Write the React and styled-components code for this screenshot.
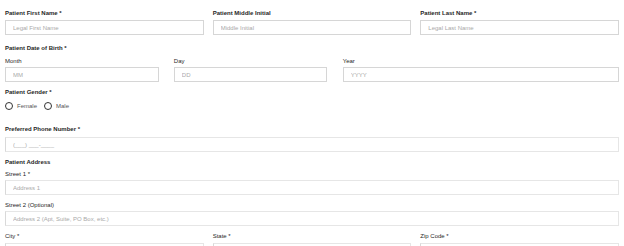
import React from "react";
import styled, { createGlobalStyle } from "styled-components";

const GlobalStyle = createGlobalStyle`
  body {
    margin: 0;
    background: #ffffff;
    font-family: "Liberation Sans", Arial, sans-serif;
  }
`;

const Form = styled.form`
  width: 614px;
  padding: 9px 5px 0;
  display: flex;
  flex-direction: column;
`;

const Row = styled.div`
  display: flex;
  justify-content: space-between;
  gap: ${(p) => p.gap || 9}px;
  margin-top: ${(p) => p.mt || 0}px;
`;

const Field = styled.div`
  display: flex;
  flex-direction: column;
  flex: ${(p) => (p.basis ? `0 0 ${p.basis}` : "1 1 0")};
  min-width: 0;
  margin-top: ${(p) => p.mt || 0}px;
`;

const Label = styled.label`
  font-size: 6px;
  line-height: 8px;
  height: 8px;
  color: #1f1f1f;
  font-weight: ${(p) => (p.bold ? 700 : 400)};
  margin-top: ${(p) => p.mt || 0}px;
  margin-bottom: ${(p) => (p.mb === undefined ? 3 : p.mb)}px;
`;

const Input = styled.input`
  box-sizing: border-box;
  width: 100%;
  height: 15px;
  padding: 0 7px;
  border: 1px solid ${(p) => (p.soft ? "#e6e6e6" : "#d6d6d6")};
  border-left-color: ${(p) => (p.soft ? "#d9d9d9" : "#d6d6d6")};
  border-radius: 0;
  font-family: "Liberation Sans", Arial, sans-serif;
  font-size: 6px;
  color: #333;
  background: #fff;
  outline: none;
  &::placeholder {
    color: #a9a9a9;
  }
`;

const RadioGroup = styled.div`
  display: flex;
  align-items: center;
  gap: 7px;
  height: 10px;
  margin-top: 5px;
`;

const RadioOption = styled.label`
  display: flex;
  align-items: center;
  gap: 4px;
  font-size: 6px;
  color: #555;
`;

const Circle = styled.span`
  box-sizing: border-box;
  width: 8px;
  height: 8px;
  border: 1px solid #333;
  border-radius: 50%;
  display: inline-block;
`;

export default function App() {
  return (
    <>
      <GlobalStyle />
      <Form>
        <Row>
          <Field>
            <Label bold>Patient First Name *</Label>
            <Input placeholder="Legal First Name" />
          </Field>
          <Field>
            <Label bold>Patient Middle Initial</Label>
            <Input placeholder="Middle Initial" />
          </Field>
          <Field>
            <Label bold>Patient Last Name *</Label>
            <Input placeholder="Legal Last Name" />
          </Field>
        </Row>

        <Label bold mt={9} mb={5}>
          Patient Date of Birth *
        </Label>
        <Row gap={15}>
          <Field basis="25%">
            <Label mb={2}>Month</Label>
            <Input placeholder="MM" />
          </Field>
          <Field basis="25%">
            <Label mb={2}>Day</Label>
            <Input placeholder="DD" />
          </Field>
          <Field basis="45%">
            <Label mb={2}>Year</Label>
            <Input placeholder="YYYY" />
          </Field>
        </Row>

        <Label bold mt={6} mb={0}>
          Patient Gender *
        </Label>
        <RadioGroup>
          <RadioOption>
            <Circle />
            Female
          </RadioOption>
          <RadioOption>
            <Circle />
            Male
          </RadioOption>
        </RadioGroup>

        <Label bold mt={14} mb={4}>
          Preferred Phone Number *
        </Label>
        <Input soft placeholder="(___) ___-____" />

        <Label bold mt={6} mb={4}>
          Patient Address
        </Label>
        <Label mb={2}>Street 1 *</Label>
        <Input soft placeholder="Address 1" />
        <Label mt={6} mb={2}>
          Street 2 (Optional)
        </Label>
        <Input soft placeholder="Address 2 (Apt, Suite, PO Box, etc.)" />

        <Row mt={6}>
          <Field>
            <Label mb={3}>City *</Label>
            <Input soft />
          </Field>
          <Field>
            <Label mb={3}>State *</Label>
            <Input soft />
          </Field>
          <Field>
            <Label mb={3}>Zip Code *</Label>
            <Input soft />
          </Field>
        </Row>
      </Form>
    </>
  );
}
